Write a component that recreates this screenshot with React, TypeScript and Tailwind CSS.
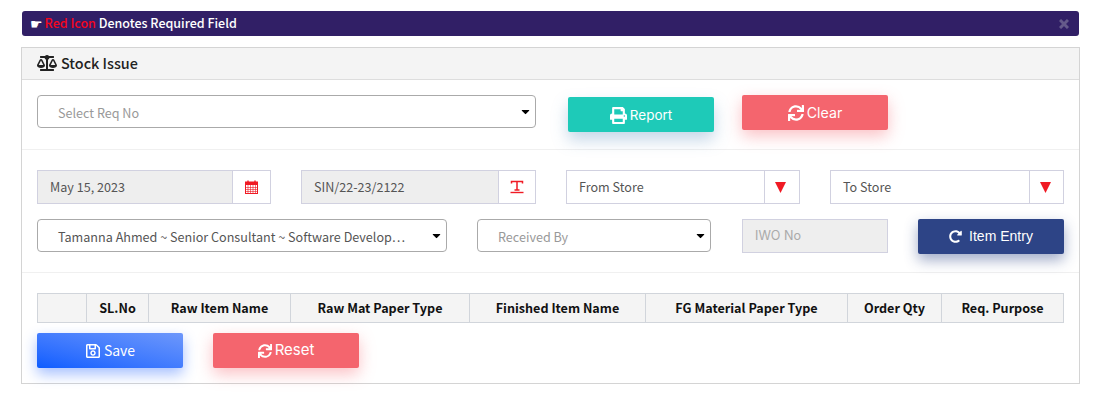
import { FaBalanceScale, FaPrint, FaSync, FaRegSave, FaRedoAlt, FaCaretDown } from "react-icons/fa";

const columns = [
  { label: "", width: "w-[49px]" },
  { label: "SL.No", width: "w-[62px]" },
  { label: "Raw Item Name", width: "w-[142px]" },
  { label: "Raw Mat Paper Type", width: "w-[179px]" },
  { label: "Finished Item Name", width: "w-[176px]" },
  { label: "FG Material Paper Type", width: "w-[202px]" },
  { label: "Order Qty", width: "w-[94px]" },
  { label: "Req. Purpose", width: "flex-1" },
];

function CalendarIcon() {
  return (
    <svg width="13" height="14" viewBox="0 0 13 14" fill="none">
      <rect x="0.5" y="2" width="12" height="11.5" stroke="#f01a24" />
      <rect x="0.5" y="2" width="12" height="3" fill="#f01a24" />
      <path d="M0.5 7.5H12.5M0.5 9.5H12.5M0.5 11.5H12.5M3 5V13M5.5 5V13M8 5V13M10.5 5V13" stroke="#f01a24" strokeWidth="0.6" />
      <path d="M3 0.5V3M10 0.5V3" stroke="#f01a24" strokeWidth="1.4" />
    </svg>
  );
}

function TextIcon() {
  return (
    <svg width="14" height="14" viewBox="0 0 14 14" fill="none" stroke="#f01a24">
      <path d="M1.5 3.5V1.5H12.5V3.5M7 1.5V10M4.5 10H9.5" strokeWidth="1.5" />
      <path d="M0.5 12.5H13.5" strokeWidth="1.4" />
    </svg>
  );
}

function RedArrow() {
  return (
    <svg width="11" height="11" viewBox="0 0 11 11">
      <path d="M0 0H11L5.5 11Z" fill="#f01a24" />
    </svg>
  );
}

function Addon({ children, className = "" }: { children: React.ReactNode; className?: string }) {
  return <div className={`flex items-center justify-center border-l border-[#d1d1e0] bg-white ${className}`}>{children}</div>;
}

function SelectBox({ text, muted, className = "" }: { text: string; muted?: boolean; className?: string }) {
  return (
    <div className={`flex h-[33px] items-center justify-between rounded-[4px] border border-[#aaaaaa] bg-white pl-5 pr-[3px] text-[12.6px] ${muted ? "text-[#999999]" : "text-[#555555]"} ${className}`}>
      <span className="whitespace-nowrap pt-[3px]">{text}</span>
      <FaCaretDown className="shrink-0 text-[13px] text-black" />
    </div>
  );
}

function ActionButton({ icon, text, color, className = "" }: { icon: React.ReactNode; text: string; color: string; className?: string }) {
  return (
    <button className={`flex h-[35px] w-[146px] shrink-0 items-center justify-center gap-[3px] rounded-[2px] text-white ${color} ${className}`}>
      {icon}
      <span>{text}</span>
    </button>
  );
}

export default function App() {
  return (
    <div className="h-[415px] w-[1100px] overflow-hidden bg-white pl-[21px] pt-[11px] font-['Noto_Sans_CJK_SC',sans-serif]">
      <div className="ml-px flex h-[25px] w-[1057px] items-center justify-between rounded-[3px] bg-[#311f66] pl-2 pr-[10px] text-[12.5px] font-medium text-white">
        <div className="flex items-center gap-[2px]">
          <span className="font-['DejaVu_Sans',sans-serif] text-[14px] leading-none">☛</span>
          <span><span className="text-[#f5051d]">Red Icon</span> Denotes Required Field</span>
        </div>
        <svg width="10" height="10" viewBox="0 0 10 10" stroke="#655a8a" strokeWidth="3">
          <path d="M1 1L9 9M9 1L1 9" />
        </svg>
      </div>

      <div className="mt-[11px] h-[337px] w-[1059px] border border-[#d4d4d4] bg-white">
        <div className="flex h-[32px] items-center gap-[4px] border-b border-[#dddddd] bg-[#f4f4f4] pb-[2px] pl-[15px] text-[14.4px] font-medium text-[#222222]">
          <FaBalanceScale className="text-[20px] text-[#222222]" />
          <span>Stock Issue</span>
        </div>

        <div className="flex h-[70px] border-b border-[#f0f0f0] pl-[15px] pt-[15px]">
          <SelectBox text="Select Req No" muted className="w-[499px]" />
          <ActionButton
            icon={<FaPrint className="text-[17px]" />}
            text="Report"
            color="bg-[#1ecab8] shadow-[0_8px_16px_rgba(90,140,190,0.35)]"
            className="ml-8 mt-[2px] pt-[1px] font-['Inter',sans-serif] text-[13.5px]"
          />
          <ActionButton
            icon={<FaSync className="text-[16px]" />}
            text="Clear"
            color="bg-[#f4656e] shadow-[0_6px_16px_rgba(245,101,111,0.4)]"
            className="ml-7 font-['Inter',sans-serif] text-[14.2px]"
          />
        </div>

        <div className="border-b border-[#f0f0f0] pb-[18px] pl-[15px] pt-5 text-[12.6px] text-[#555555]">
          <div className="flex h-[34px]">
            <div className="flex w-[234px] border border-[#d1d1e0]">
              <div className="flex flex-1 items-center bg-[#eeeeee] pl-3">May 15, 2023</div>
              <Addon className="w-[38px]"><CalendarIcon /></Addon>
            </div>
            <div className="ml-[30px] flex w-[235px] border border-[#d1d1e0]">
              <div className="flex flex-1 items-center bg-[#eeeeee] pl-3">SIN/22-23/2122</div>
              <Addon className="w-[37px]"><TextIcon /></Addon>
            </div>
            <div className="ml-[30px] flex w-[234px] border border-[#d1d1e0]">
              <div className="flex flex-1 items-center pl-3">From Store</div>
              <Addon className="w-[35px] border-[#c4c4c4] pr-[3px]"><RedArrow /></Addon>
            </div>
            <div className="ml-[30px] flex w-[234px] border border-[#d1d1e0]">
              <div className="flex flex-1 items-center pl-3">To Store</div>
              <Addon className="w-[34px] border-[#c4c4c4] pr-[3px]"><RedArrow /></Addon>
            </div>
          </div>

          <div className="mt-[15px] flex items-start">
            <SelectBox text="Tamanna Ahmed ~ Senior Consultant ~ Software Develop…" className="w-[410px]" />
            <SelectBox text="Received By" muted className="ml-[30px] w-[234px]" />
            <div className="ml-[31px] flex h-[34px] w-[146px] items-center border border-[#d1d1e0] bg-[#eeeeee] pl-3 pt-[1px] font-['Inter',sans-serif] text-[#aaaaaa]">IWO No</div>
            <ActionButton
              icon={<FaRedoAlt className="text-[13px]" />}
              text="Item Entry"
              color="bg-[#2d4486] shadow-[0_6px_14px_rgba(45,68,134,0.45)]"
              className="ml-[30px] h-[34px] gap-[7px] font-['Liberation_Sans',sans-serif] text-[14px]"
            />
          </div>
        </div>

        <div className="pl-[15px] pt-5">
          <div className="flex h-[30px] w-[1027px] border border-[#d1d5db] bg-[#f4f4f4] text-[12.6px] font-bold text-[#111111]">
            {columns.map((col, i) => (
              <div key={i} className={`flex items-center justify-center border-r border-[#d1d5db] last:border-r-0 ${col.width}`}>
                {col.label}
              </div>
            ))}
          </div>
          <div className="mt-[10px] flex gap-[30px]">
            <ActionButton
              icon={<FaRegSave className="text-[16px]" />}
              text="Save"
              color="bg-gradient-to-tr from-[#0a5cff] to-[#6d97fb] shadow-[0_6px_14px_rgba(30,95,255,0.4)]"
              className="gap-[2px] text-[14px]"
            />
            <ActionButton
              icon={<FaSync className="text-[14px]" />}
              text="Reset"
              color="bg-[#f4656e] shadow-[0_6px_16px_rgba(245,101,111,0.4)]"
              className="font-['Inter',sans-serif] text-[15px]"
            />
          </div>
        </div>
      </div>
    </div>
  );
}
